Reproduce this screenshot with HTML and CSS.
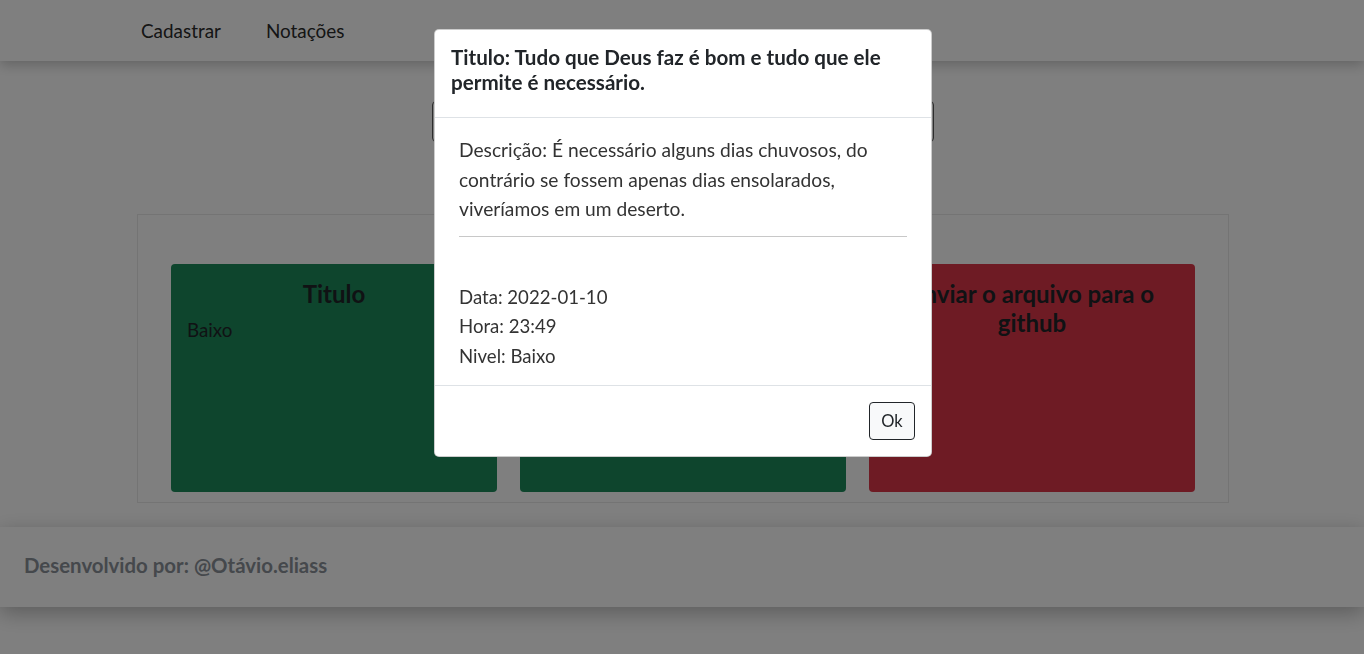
FILE: index.html
```html
<!DOCTYPE html>
<html lang="pt-BR">
<head>
<meta charset="utf-8">
<title>Notações</title>
<link rel="stylesheet" href="styles.css">
</head>
<body>
<header class="navbar">
  <nav class="nav-links">
    <a class="nav-link" href="#">Cadastrar</a>
    <a class="nav-link" href="#">Notações</a>
  </nav>
</header>

<main class="main">
  <div class="search-box"></div>
  <section class="board">
    <article class="note note-green">
      <h3 class="note-title">Titulo</h3>
      <p class="note-level">Baixo</p>
    </article>
    <article class="note note-green"></article>
    <article class="note note-red">
      <h3 class="note-title">Enviar o arquivo para o github</h3>
    </article>
  </section>
</main>

<footer class="footer">
  <p class="footer-text">Desenvolvido por: @Otávio.eliass</p>
</footer>

<div class="backdrop"></div>

<div class="modal">
  <div class="modal-header">
    <h5 class="modal-title">Titulo: Tudo que Deus faz é bom e tudo que ele permite é necessário.</h5>
  </div>
  <div class="modal-body">
    <p class="modal-desc">Descrição: É necessário alguns dias chuvosos, do contrário se fossem apenas dias ensolarados, viveríamos em um deserto.</p>
    <hr class="modal-rule">
    <p class="modal-meta">Data: 2022-01-10<br>Hora: 23:49<br>Nivel: Baixo</p>
  </div>
  <div class="modal-footer">
    <button class="btn-ok" type="button">Ok</button>
  </div>
</div>
</body>
</html>
```

FILE: styles.css
```css
* { box-sizing: border-box; }

html, body {
  margin: 0;
  padding: 0;
  height: 100%;
}

body {
  font-family: Lato, "Noto Sans", sans-serif;
  background: #ffffff;
  color: #212529;
  overflow: hidden;
}

.navbar {
  height: 61px;
  background: #ffffff;
  box-shadow: 0 4px 12px rgba(0, 0, 0, 0.22);
  display: flex;
  align-items: center;
  padding-left: 141px;
  position: relative;
  z-index: 1;
}

.nav-links {
  display: flex;
  gap: 45px;
}

.nav-link {
  font-size: 18.9px;
  color: #2b2b2b;
  text-decoration: none;
}

.main {
  display: flex;
  flex-direction: column;
  align-items: center;
  padding-top: 40px;
  padding-left: 2px;
}

.search-box {
  width: 502px;
  height: 41px;
  border: 1px solid #5a5a5a;
  border-radius: 4px;
}

.board {
  margin-top: 72px;
  width: 1092px;
  height: 289px;
  border: 1px solid #e8e8e8;
  padding: 49px 32px 10px 33px;
  display: flex;
  gap: 23px;
}

.note {
  width: 326px;
  height: 228px;
  border-radius: 4px;
  padding: 16px;
  color: #212529;
}

.note-green { background: #1c8a5a; }
.note-red { background: #dc3748; }

.note-title {
  margin: 0;
  font-size: 24px;
  font-weight: 700;
  line-height: 28.8px;
  text-align: center;
}

.note-level {
  margin: 9px 0 0;
  font-size: 18.8px;
  line-height: 24px;
}

.footer {
  margin-top: 24px;
  height: 80px;
  background: #ffffff;
  box-shadow: 0 6px 20px rgba(0, 0, 0, 0.28);
  display: flex;
  align-items: center;
  padding-left: 24px;
}

.footer-text {
  margin: 0 0 4px;
  font-size: 20.4px;
  font-weight: 700;
  color: #8a9198;
}

.backdrop {
  position: fixed;
  inset: 0;
  background: rgba(0, 0, 0, 0.5);
  z-index: 10;
}

.modal {
  position: fixed;
  top: 29px;
  left: 434px;
  width: 498px;
  background: #ffffff;
  border: 1px solid rgba(0, 0, 0, 0.2);
  border-radius: 5px;
  z-index: 20;
  display: flex;
  flex-direction: column;
}

.modal-header {
  padding: 15px 16px 22px;
  border-bottom: 1px solid #dee2e6;
}

.modal-title {
  margin: 0;
  font-size: 20.6px;
  font-weight: 700;
  line-height: 25px;
  color: #212529;
}

.modal-body {
  padding: 17px 24px 14px;
}

.modal-desc,
.modal-meta {
  margin: 0;
  font-size: 19.2px;
  line-height: 29.5px;
  color: #333333;
}

.modal-meta {
  font-size: 18.6px;
}

.modal-rule {
  margin: 12px 0 46px;
  border: 0;
  border-top: 1px solid #c8c8c8;
}

.modal-footer {
  border-top: 1px solid #dee2e6;
  padding: 16px;
  display: flex;
  justify-content: flex-end;
}

.btn-ok {
  width: 46px;
  height: 38px;
  background: #f8f9fa;
  border: 1px solid #212529;
  border-radius: 4px;
  font-family: Lato, "Noto Sans", sans-serif;
  font-size: 16.5px;
  color: #212529;
  padding: 0;
}
```
